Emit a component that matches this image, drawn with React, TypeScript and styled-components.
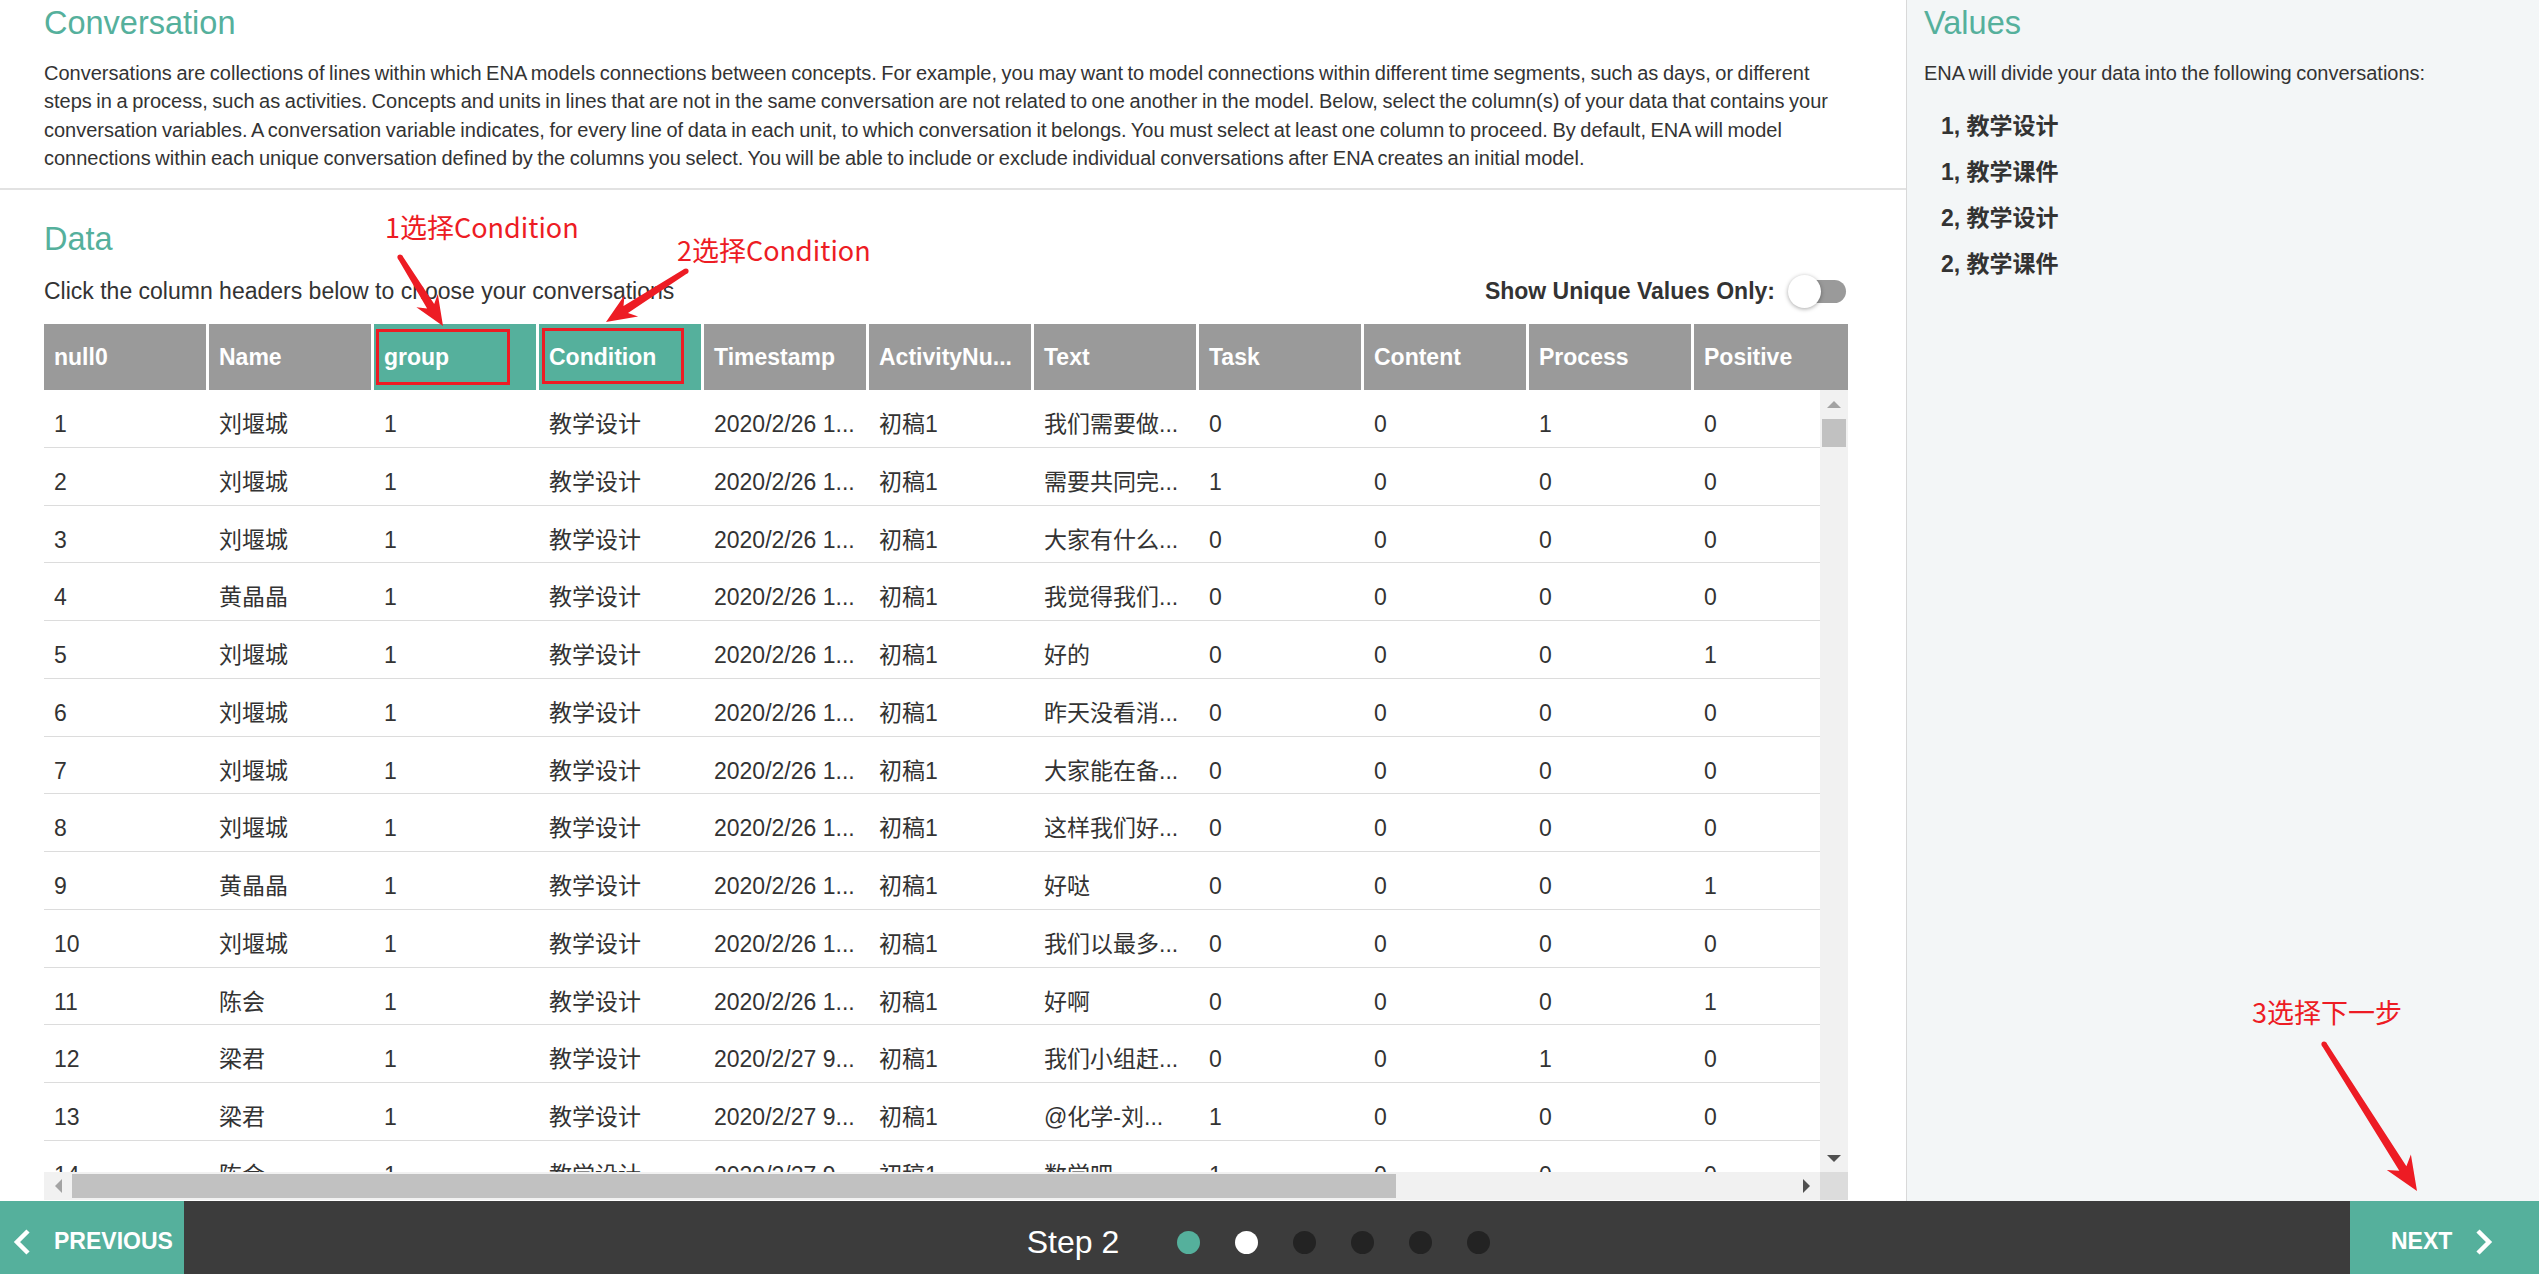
import React from "react";
import styled, { createGlobalStyle } from "styled-components";

const TEAL = "#55b09c";
const RED = "#ed1c24";
const TEXT = "#333333";

const GlobalStyle = createGlobalStyle`
  html, body { margin: 0; padding: 0; }
  body {
    font-family: "Liberation Sans", Arial, "Noto Sans CJK SC", sans-serif;
    color: ${TEXT};
    background: #ffffff;
    overflow: hidden;
  }
  * { box-sizing: border-box; }
`;

const Page = styled.div`
  position: relative;
  width: 2539px;
  height: 1274px;
  display: grid;
  grid-template-columns: 1906px 1fr;
  grid-template-rows: 1201px 73px;
  overflow: hidden;
`;

const Main = styled.main`
  display: flex;
  flex-direction: column;
  min-height: 0;
`;

const IntroSection = styled.section`
  padding: 5px 51px 16px 44px;
  border-bottom: 2px solid #e2e2e2;
`;

const Heading = styled.h2`
  margin: 0;
  font-size: 32.5px;
  line-height: 36px;
  font-weight: normal;
  color: ${TEAL};
`;

const Paragraph = styled.p`
  margin: 18px 0 0;
  font-size: 20px;
  word-spacing: -1px;
  line-height: 28.3px;
`;

const DataSection = styled.section`
  flex: 1;
  min-height: 0;
  display: flex;
  flex-direction: column;
  padding: 31px 0 1px 44px;
`;

const Toolbar = styled.div`
  width: 1804px;
  height: 40px;
  margin-top: 14px;
  margin-bottom: 13px;
  padding-right: 2px;
  display: flex;
  align-items: center;
  justify-content: space-between;
  font-size: 23px;
`;

const UniqueToggle = styled.label`
  display: flex;
  align-items: center;
  gap: 13px;
  font-weight: bold;
`;

const Switch = styled.span`
  position: relative;
  display: block;
  width: 58px;
  height: 33px;
`;

const SwitchTrack = styled.span`
  position: absolute;
  left: 2px;
  right: 0;
  top: 5px;
  height: 23px;
  border-radius: 12px;
  background: #9a9a9a;
`;

const SwitchKnob = styled.span`
  position: absolute;
  left: 0;
  top: 0;
  width: 33px;
  height: 33px;
  border-radius: 50%;
  background: #ffffff;
  box-shadow: 0 1px 4px rgba(0, 0, 0, 0.35);
`;

const TableFrame = styled.div`
  flex: 1;
  min-height: 0;
  width: 1804px;
  display: grid;
  grid-template-columns: 1fr 28px;
  grid-template-rows: 66px 1fr 28px;
  font-size: 23px;
`;

const HeaderViewport = styled.div`
  grid-column: 1 / span 2;
  overflow: hidden;
`;

const HeaderRow = styled.div`
  display: flex;
  gap: 3px;
  width: max-content;
`;

const HeaderCell = styled.div<{ $selected?: boolean }>`
  flex: 0 0 162px;
  height: 66px;
  line-height: 66px;
  padding: 0 10px;
  background: ${(p) => (p.$selected ? TEAL : "#9a9a9a")};
  color: #ffffff;
  font-weight: bold;
  white-space: nowrap;
  overflow: hidden;
`;

const BodyViewport = styled.div`
  overflow: hidden;
  min-height: 0;
`;

const BodyRow = styled.div`
  display: flex;
  gap: 3px;
  height: 57.75px;
  border-bottom: 1px solid #dcdcdc;
`;

const BodyCell = styled.div`
  flex: 0 0 162px;
  padding: 14px 10px 0;
  line-height: 40px;
  white-space: nowrap;
  overflow: hidden;
  color: ${TEXT};
`;

const VScroll = styled.div`
  background: #f1f1f1;
  display: flex;
  flex-direction: column;
  min-height: 0;
`;

const HScroll = styled.div`
  background: #f1f1f1;
  display: flex;
`;

const ScrollCorner = styled.div`
  background: #dcdcdc;
`;

const ScrollButton = styled.div`
  flex: 0 0 28px;
  width: 28px;
  height: 28px;
  display: flex;
  align-items: center;
  justify-content: center;
`;

const VThumb = styled.div`
  margin: 1px 2px 0;
  height: 28px;
  background: #c1c1c1;
`;

const HThumb = styled.div<{ $w: number }>`
  margin: 2px 0;
  width: ${(p) => p.$w}px;
  background: #c1c1c1;
`;

const Spacer = styled.div`
  flex: 1;
`;

const SidePanel = styled.aside`
  background: #f3f6f7;
  border-left: 1px solid #d9d9d9;
  padding: 5px 18px 0 17px;
`;

const ValuesList = styled.ul`
  list-style: none;
  margin: 16px 0 0;
  padding: 0 0 0 17px;
`;

const ValueItem = styled.li`
  font-size: 23px;
  line-height: 46px;
  font-weight: bold;
  color: ${TEXT};
`;

const FooterBar = styled.footer`
  grid-column: 1 / -1;
  background: #3c3c3c;
  display: flex;
  align-items: stretch;
`;

const NavButton = styled.button<{ $side: "left" | "right" }>`
  flex: 0 0 ${(p) => (p.$side === "left" ? 184 : 189)}px;
  border: 0;
  margin: 0;
  background: ${TEAL};
  color: #ffffff;
  font-family: "Liberation Sans", Arial, sans-serif;
  font-size: 23px;
  font-weight: bold;
  display: flex;
  align-items: center;
  gap: 23px;
  padding: 8px 0 0 ${(p) => (p.$side === "left" ? 13 : 41)}px;
  cursor: pointer;
`;

const StepArea = styled.div`
  flex: 1;
  display: flex;
  align-items: center;
  justify-content: center;
  padding-top: 9px;
`;

const StepLabel = styled.span`
  color: #ffffff;
  font-size: 32px;
  margin-right: 40px;
`;

const StepDot = styled.span<{ $state: "done" | "current" | "todo" }>`
  width: 23px;
  height: 23px;
  margin: 0 17.5px;
  border-radius: 50%;
  background: ${(p) =>
    p.$state === "done" ? TEAL : p.$state === "current" ? "#ffffff" : "#232323"};
`;

const Note = styled.span<{ $x: number; $y: number }>`
  position: absolute;
  left: ${(p) => p.$x}px;
  top: ${(p) => p.$y}px;
  font-family: "Noto Sans CJK SC", "Liberation Sans", sans-serif;
  font-size: 27px;
  line-height: 30px;
  color: ${RED};
  white-space: nowrap;
  pointer-events: none;
`;

const MarkBox = styled.div<{ $x: number; $y: number; $w: number; $h: number }>`
  position: absolute;
  left: ${(p) => p.$x}px;
  top: ${(p) => p.$y}px;
  width: ${(p) => p.$w}px;
  height: ${(p) => p.$h}px;
  border: 3px solid ${RED};
  pointer-events: none;
`;

const ArrowLayer = styled.svg`
  position: absolute;
  left: 0;
  top: 0;
  pointer-events: none;
`;

const columns = [
  "null0",
  "Name",
  "group",
  "Condition",
  "Timestamp",
  "ActivityNu...",
  "Text",
  "Task",
  "Content",
  "Process",
  "Positive",
];
const selected = new Set(["group", "Condition"]);

const T26 = "2020/2/26 1...";
const T27 = "2020/2/27 9...";

const rows: string[][] = [
  ["1", "刘堰城", "1", "教学设计", T26, "初稿1", "我们需要做...", "0", "0", "1", "0"],
  ["2", "刘堰城", "1", "教学设计", T26, "初稿1", "需要共同完...", "1", "0", "0", "0"],
  ["3", "刘堰城", "1", "教学设计", T26, "初稿1", "大家有什么...", "0", "0", "0", "0"],
  ["4", "黄晶晶", "1", "教学设计", T26, "初稿1", "我觉得我们...", "0", "0", "0", "0"],
  ["5", "刘堰城", "1", "教学设计", T26, "初稿1", "好的", "0", "0", "0", "1"],
  ["6", "刘堰城", "1", "教学设计", T26, "初稿1", "昨天没看消...", "0", "0", "0", "0"],
  ["7", "刘堰城", "1", "教学设计", T26, "初稿1", "大家能在备...", "0", "0", "0", "0"],
  ["8", "刘堰城", "1", "教学设计", T26, "初稿1", "这样我们好...", "0", "0", "0", "0"],
  ["9", "黄晶晶", "1", "教学设计", T26, "初稿1", "好哒", "0", "0", "0", "1"],
  ["10", "刘堰城", "1", "教学设计", T26, "初稿1", "我们以最多...", "0", "0", "0", "0"],
  ["11", "陈会", "1", "教学设计", T26, "初稿1", "好啊", "0", "0", "0", "1"],
  ["12", "梁君", "1", "教学设计", T27, "初稿1", "我们小组赶...", "0", "0", "1", "0"],
  ["13", "梁君", "1", "教学设计", T27, "初稿1", "@化学-刘...", "1", "0", "0", "0"],
  ["14", "陈会", "1", "教学设计", T27, "初稿1", "数学吧", "1", "0", "0", "0"],
];

const conversations = ["1, 教学设计", "1, 教学课件", "2, 教学设计", "2, 教学课件"];

const Tri = ({ dir, color }: { dir: "up" | "down" | "left" | "right"; color: string }) => {
  const pts =
    dir === "up"
      ? "0,7 7,0 14,7"
      : dir === "down"
      ? "0,0 14,0 7,7"
      : dir === "left"
      ? "7,0 7,14 0,7"
      : "0,0 7,7 0,14";
  const w = dir === "up" || dir === "down" ? 14 : 7;
  const h = dir === "up" || dir === "down" ? 7 : 14;
  return (
    <svg width={w} height={h} viewBox={`0 0 ${w} ${h}`}>
      <polygon points={pts} fill={color} />
    </svg>
  );
};

const Chevron = ({ dir }: { dir: "left" | "right" }) => (
  <svg width="18" height="26" viewBox="0 0 18 26">
    <polyline
      points={dir === "left" ? "15,2 4,13 15,24" : "3,2 14,13 3,24"}
      fill="none"
      stroke="#ffffff"
      strokeWidth="4.5"
    />
  </svg>
);

function arrowPoints(x1: number, y1: number, x2: number, y2: number, headLen: number) {
  const dx = x2 - x1;
  const dy = y2 - y1;
  const L = Math.hypot(dx, dy);
  const ux = dx / L;
  const uy = dy / L;
  const px = -uy;
  const py = ux;
  const half = headLen * 0.42;
  const tailW = 2.6;
  const neckW = 4.2;
  const bx = x2 - ux * headLen;
  const by = y2 - uy * headLen;
  const nx = x2 - ux * headLen * 0.78;
  const ny = y2 - uy * headLen * 0.78;
  const p = [
    [x1 + px * tailW, y1 + py * tailW],
    [nx + px * neckW, ny + py * neckW],
    [bx + px * half, by + py * half],
    [x2, y2],
    [bx - px * half, by - py * half],
    [nx - px * neckW, ny - py * neckW],
    [x1 - px * tailW, y1 - py * tailW],
  ];
  return p.map((q) => q.map((v) => v.toFixed(1)).join(",")).join(" ");
}

const arrows = [
  { x1: 400, y1: 257, x2: 443, y2: 326, head: 30 },
  { x1: 686, y1: 271, x2: 606, y2: 322, head: 30 },
  { x1: 2324, y1: 1044, x2: 2417, y2: 1191, head: 34 },
];

export default function App() {
  return (
    <>
      <GlobalStyle />
      <Page>
        <Main>
          <IntroSection>
            <Heading>Conversation</Heading>
            <Paragraph>
              Conversations are collections of lines within which ENA models connections between
              concepts. For example, you may want to model connections within different time
              segments, such as days, or different steps in a process, such as activities. Concepts
              and units in lines that are not in the same conversation are not related to one another
              in the model. Below, select the column(s) of your data that contains your conversation
              variables. A conversation variable indicates, for every line of data in each unit, to
              which conversation it belongs. You must select at least one column to proceed. By
              default, ENA will model connections within each unique conversation defined by the
              columns you select. You will be able to include or exclude individual conversations
              after ENA creates an initial model.
            </Paragraph>
          </IntroSection>
          <DataSection>
            <Heading>Data</Heading>
            <Toolbar>
              <span>Click the column headers below to choose your conversations</span>
              <UniqueToggle>
                Show Unique Values Only:
                <Switch>
                  <SwitchTrack />
                  <SwitchKnob />
                </Switch>
              </UniqueToggle>
            </Toolbar>
            <TableFrame>
              <HeaderViewport>
                <HeaderRow>
                  {columns.map((c) => (
                    <HeaderCell key={c} $selected={selected.has(c)}>
                      {c}
                    </HeaderCell>
                  ))}
                </HeaderRow>
              </HeaderViewport>
              <BodyViewport>
                {rows.map((r) => (
                  <BodyRow key={r[0]}>
                    {r.map((v, i) => (
                      <BodyCell key={i}>{v}</BodyCell>
                    ))}
                  </BodyRow>
                ))}
              </BodyViewport>
              <VScroll>
                <ScrollButton>
                  <Tri dir="up" color="#a3a3a3" />
                </ScrollButton>
                <VThumb />
                <Spacer />
                <ScrollButton>
                  <Tri dir="down" color="#505050" />
                </ScrollButton>
              </VScroll>
              <HScroll>
                <ScrollButton>
                  <Tri dir="left" color="#a3a3a3" />
                </ScrollButton>
                <HThumb $w={1324} />
                <Spacer />
                <ScrollButton>
                  <Tri dir="right" color="#505050" />
                </ScrollButton>
              </HScroll>
              <ScrollCorner />
            </TableFrame>
          </DataSection>
        </Main>
        <SidePanel>
          <Heading>Values</Heading>
          <Paragraph>ENA will divide your data into the following conversations:</Paragraph>
          <ValuesList>
            {conversations.map((c) => (
              <ValueItem key={c}>{c}</ValueItem>
            ))}
          </ValuesList>
        </SidePanel>
        <FooterBar>
          <NavButton $side="left">
            <Chevron dir="left" />
            PREVIOUS
          </NavButton>
          <StepArea>
            <StepLabel>Step 2</StepLabel>
            <StepDot $state="done" />
            <StepDot $state="current" />
            <StepDot $state="todo" />
            <StepDot $state="todo" />
            <StepDot $state="todo" />
            <StepDot $state="todo" />
          </StepArea>
          <NavButton $side="right">
            NEXT
            <Chevron dir="right" />
          </NavButton>
        </FooterBar>

        <MarkBox $x={376} $y={329} $w={134} $h={56} />
        <MarkBox $x={542} $y={328} $w={142} $h={56} />
        <Note $x={385} $y={212}>1选择Condition</Note>
        <Note $x={677} $y={235}>2选择Condition</Note>
        <Note $x={2252} $y={997}>3选择下一步</Note>
        <ArrowLayer width={2539} height={1274} viewBox="0 0 2539 1274">
          {arrows.map((a, i) => (
            <g key={i}>
              <polygon points={arrowPoints(a.x1, a.y1, a.x2, a.y2, a.head)} fill={RED} />
              <circle cx={a.x1} cy={a.y1} r={2.6} fill={RED} />
            </g>
          ))}
        </ArrowLayer>
      </Page>
    </>
  );
}
